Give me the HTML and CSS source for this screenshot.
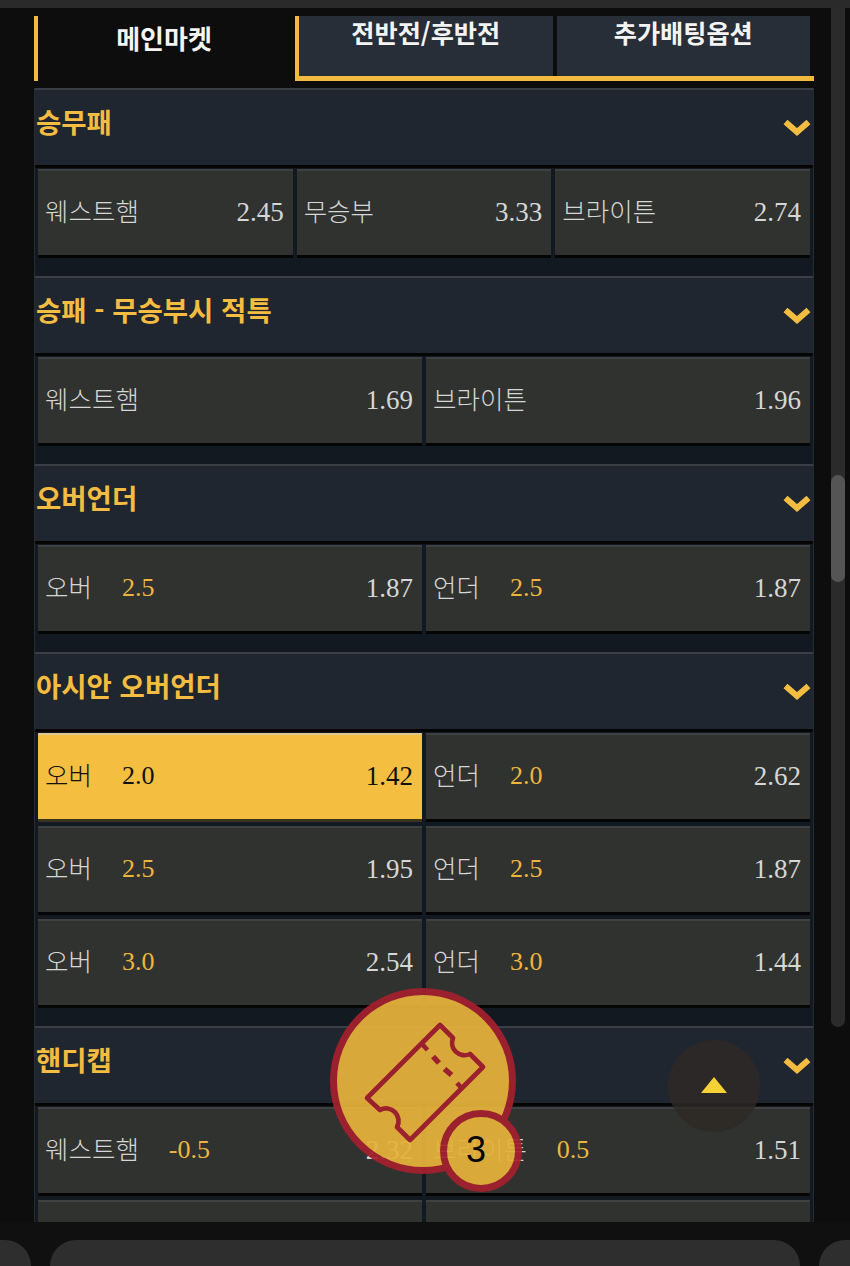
FILE: index.html
```html
<!DOCTYPE html>
<html lang="ko">

<head>
    <meta charset="UTF-8">
    <meta name="viewport" content="width=device-width, initial-scale=1.0">
    <title>메인마켓</title>
    <link rel="stylesheet" href="styles.css">
</head>

<body>
    <div class="top-strip"></div>

    <main class="content">
        <!-- Tabs -->
        <div class="tabs">
            <div class="tab active">메인마켓</div>
            <div class="tab-group">
                <div class="tab">전반전/후반전</div>
                <div class="tab">추가배팅옵션</div>
            </div>
        </div>

        <!-- Markets -->
        <section class="market">
            <div class="market-head">
                <h2>승무패</h2>
                <svg class="chevron" viewBox="0 0 28 18"><path d="M2.500 4L14 14L25.500 4" /></svg>
            </div>
            <div class="odds-grid three">
                <div class="odd"><span class="name">웨스트햄</span><span class="price">2.45</span></div>
                <div class="odd"><span class="name">무승부</span><span class="price">3.33</span></div>
                <div class="odd"><span class="name">브라이튼</span><span class="price">2.74</span></div>
            </div>
        </section>

        <section class="market">
            <div class="market-head">
                <h2>승패 - 무승부시 적특</h2>
                <svg class="chevron" viewBox="0 0 28 18"><path d="M2.500 4L14 14L25.500 4" /></svg>
            </div>
            <div class="odds-grid">
                <div class="odd"><span class="name">웨스트햄</span><span class="price">1.69</span></div>
                <div class="odd"><span class="name">브라이튼</span><span class="price">1.96</span></div>
            </div>
        </section>

        <section class="market">
            <div class="market-head">
                <h2>오버언더</h2>
                <svg class="chevron" viewBox="0 0 28 18"><path d="M2.500 4L14 14L25.500 4" /></svg>
            </div>
            <div class="odds-grid">
                <div class="odd"><span class="name">오버</span><span class="line">2.5</span><span class="price">1.87</span></div>
                <div class="odd"><span class="name">언더</span><span class="line">2.5</span><span class="price">1.87</span></div>
            </div>
        </section>

        <section class="market">
            <div class="market-head">
                <h2>아시안 오버언더</h2>
                <svg class="chevron" viewBox="0 0 28 18"><path d="M2.500 4L14 14L25.500 4" /></svg>
            </div>
            <div class="odds-grid">
                <div class="odd selected"><span class="name">오버</span><span class="line">2.0</span><span class="price">1.42</span></div>
                <div class="odd"><span class="name">언더</span><span class="line">2.0</span><span class="price">2.62</span></div>
                <div class="odd"><span class="name">오버</span><span class="line">2.5</span><span class="price">1.95</span></div>
                <div class="odd"><span class="name">언더</span><span class="line">2.5</span><span class="price">1.87</span></div>
                <div class="odd"><span class="name">오버</span><span class="line">3.0</span><span class="price">2.54</span></div>
                <div class="odd"><span class="name">언더</span><span class="line">3.0</span><span class="price">1.44</span></div>
            </div>
        </section>

        <section class="market">
            <div class="market-head">
                <h2>핸디캡</h2>
                <svg class="chevron" viewBox="0 0 28 18"><path d="M2.500 4L14 14L25.500 4" /></svg>
            </div>
            <div class="odds-grid">
                <div class="odd"><span class="name">웨스트햄</span><span class="line">-0.5</span><span class="price">2.32</span></div>
                <div class="odd"><span class="name">브라이튼</span><span class="line">0.5</span><span class="price">1.51</span></div>
                <div class="odd"></div>
                <div class="odd"></div>
            </div>
        </section>

        <!-- Scrollbar -->
        <div class="scroll-track"><div class="scroll-thumb"></div></div>
    </main>

    <!-- Bottom bar -->
    <nav class="bottom-bar">
        <div class="pill side-left"></div>
        <div class="pill main-pill"></div>
        <div class="pill side-right"></div>
    </nav>

    <!-- Floating betslip -->
    <div class="betslip">
        <svg class="ticket" viewBox="0 0 186 186">
            <path class="ticket-body" d="M110 37L123 50A12.500 12.500 0 0 0 140 66L153 79L80 152L67 139A12.500 12.500 0 0 0 50 122L37 110Z" />
            <path class="ticket-mark" d="M92 56L97.500 62M127 95L132 100.500" />
            <path class="ticket-dash" d="M103 68.500L109 75M114.500 81L121.500 87" />
        </svg>
        <span class="badge">3</span>
    </div>

    <!-- Back to top -->
    <button class="to-top" aria-label="위로"><span class="arrow"></span></button>
</body>

</html>
```

FILE: styles.css
```css
/* General Styles */
* {
    box-sizing: border-box;
}

body {
    margin: 0;
    width: 850px;
    height: 1266px;
    overflow: hidden;
    position: relative;
    display: flex;
    flex-direction: column;
    background: #0d0d0d;
    color: #d6d6d6;
    font-family: "Noto Sans CJK KR", "Liberation Sans", sans-serif;
}

.top-strip {
    height: 8px;
    background: #2a2a2a;
}

.content {
    flex: 1;
    min-height: 0;
    overflow: hidden;
    position: relative;
    padding: 8px 36px 0 34px;
}

/* Tabs */
.tabs {
    display: flex;
    height: 65px;
    margin-bottom: 7px;
}

.tab {
    flex: 1;
    font-size: 25.200px;
    font-weight: 700;
    color: #f4f4f4;
    text-align: center;
    background: #272e37;
    line-height: 32px;
}

.tab.active {
    flex: 0 0 261px;
    background: #0d0d0d;
    border-left: 4px solid #f2bb3f;
    padding: 6px 5px 0 0;
    font-size: 26px;
}

.tab-group {
    flex: 1;
    display: flex;
    gap: 4px;
    padding-right: 4px;
    border-left: 4px solid #f2bb3f;
    border-bottom: 5px solid #f2bb3f;
}

/* Markets */
.market {
    background: #131920;
    border-left: 1px solid #262c33;
    border-right: 1px solid #262c33;
    padding-bottom: 18px;
}

.market-head {
    height: 80px;
    display: flex;
    align-items: center;
    justify-content: space-between;
    background: #20262f;
    border-top: 2px solid #3a3f46;
    padding: 0 2px 13px 1px;
    border-bottom: 3px solid #050505;
}

.market-head h2 {
    margin: 0;
    font-size: 27.500px;
    font-weight: 700;
    color: #f4bc40;
}

.chevron {
    width: 28px;
    height: 18px;
    fill: none;
    stroke: #f4bc40;
    stroke-width: 6;
    margin-top: 12px;
}

.odds-grid {
    display: grid;
    grid-template-columns: repeat(2, 1fr);
    gap: 4px;
    padding: 1px 3px 0;
}

.odds-grid.three {
    grid-template-columns: repeat(3, 1fr);
}

.odd {
    height: 89px;
    display: flex;
    align-items: center;
    padding: 0 9px 2px 7px;
    background: #30322f;
    border-top: 2px solid #3e4042;
    border-bottom: 3px solid #050505;
}

.name {
    font-size: 25.500px;
    font-weight: 300;
    margin-right: 30px;
    margin-top: -5px;
}

.line,
.price {
    font-family: "Liberation Serif", serif;
    font-size: 27px;
}

.line {
    font-size: 26px;
    color: #ecb63e;
}

.price {
    margin-left: auto;
}

.odd.selected {
    background: #f4bf40;
    border-top-color: #d9c88e;
    border-bottom-color: #3a3320;
    color: #111;
}

.odd.selected .line {
    color: #111;
}

/* Scrollbar */
.scroll-track {
    position: absolute;
    top: 0;
    left: 831px;
    width: 14px;
    height: 1019px;
    background: #2b2b2b;
    border-radius: 0 0 7px 7px;
}

.scroll-thumb {
    position: absolute;
    top: 467px;
    left: 0;
    width: 14px;
    height: 107px;
    background: #555;
    border-radius: 7px;
}

/* Bottom bar */
.bottom-bar {
    height: 44px;
    display: flex;
    align-items: flex-start;
    gap: 19px;
    padding-top: 18px;
    background: #101010;
}

.pill {
    height: 40px;
    background: #2e2e2e;
    border-radius: 26px 26px 0 0;
}

.side-left {
    width: 31px;
    border-radius: 0 26px 0 0;
}

.main-pill {
    flex: 1;
}

.side-right {
    width: 31px;
    border-radius: 26px 0 0 0;
}

/* Floating betslip */
.betslip {
    position: absolute;
    left: 330px;
    top: 988px;
    width: 186px;
    height: 186px;
    border-radius: 50%;
    background: #e6b33b;
    border: 7px solid #a5202e;
    opacity: 0.93;
}

.ticket {
    position: absolute;
    left: -7px;
    top: -7px;
    width: 186px;
    height: 186px;
    fill: none;
    stroke: #a5202e;
    stroke-width: 4.700;
    stroke-linejoin: round;
}

.ticket-dash {
    stroke-width: 5.500;
}

.badge {
    position: absolute;
    left: 103px;
    top: 115px;
    width: 82px;
    height: 82px;
    border-radius: 50%;
    background: #e6b33b;
    border: 7px solid #a5202e;
    color: #000;
    font-family: "Liberation Sans", sans-serif;
    font-size: 36px;
    line-height: 66px;
    text-align: center;
    padding-right: 10px;
}

/* Back to top */
.to-top {
    position: absolute;
    left: 668px;
    top: 1040px;
    width: 92px;
    height: 92px;
    border: none;
    border-radius: 50%;
    background: rgba(46, 41, 37, 0.8);
    display: flex;
    align-items: center;
    justify-content: center;
    padding: 0;
}

.arrow {
    width: 0;
    height: 0;
    margin-bottom: 3px;
    border-left: 13px solid transparent;
    border-right: 13px solid transparent;
    border-bottom: 16px solid #f5d135;
}
```
